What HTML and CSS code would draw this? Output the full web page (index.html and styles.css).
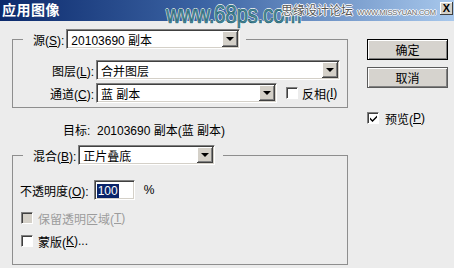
FILE: index.html
```
<!DOCTYPE html>
<html lang="zh-CN">
<head>
    <meta charset="UTF-8">
    <title>应用图像</title>
    <link rel="stylesheet" href="styles.css">
</head>
<body>

    <div class="titlebar">
        <span class="title">应用图像</span>
        <span class="wm-site">www.68ps.com</span>
        <span class="wm-forum">思缘设计论坛 <small>WWW.MISSYUAN.COM</small></span>
        <span class="close">X</span>
    </div>

    <div class="dialog">
        <div class="left">
            <fieldset class="group g1">
                <legend>
                    <span class="legend-lbl">源(<u>S</u>):</span>
                    <div class="select src"><span>20103690 副本</span><i class="arrow"></i></div>
                </legend>
                <div class="rows">
                    <div class="row">
                        <span class="lbl">图层(<u>L</u>):</span>
                        <div class="select layer"><span>合并图层</span><i class="arrow"></i></div>
                    </div>
                    <div class="row">
                        <span class="lbl">通道(<u>C</u>):</span>
                        <div class="select channel"><span>蓝 副本</span><i class="arrow"></i></div>
                        <label class="check invert"><span class="box"></span>反相(<u>I</u>)</label>
                    </div>
                </div>
            </fieldset>

            <p class="target">目标:&nbsp; 20103690 副本(蓝 副本)</p>

            <fieldset class="group g2">
                <legend>
                    <span class="legend-lbl">混合(<u>B</u>):</span>
                    <div class="select blend"><span>正片叠底</span><i class="arrow"></i></div>
                </legend>
                <div class="rows">
                    <div class="row opacity">
                        <span>不透明度(<u>O</u>):</span>
                        <div class="input"><span class="sel">100</span></div>
                        <span class="pct">%</span>
                    </div>
                    <label class="check disabled"><span class="box"></span>保留透明区域(<u>T</u>)</label>
                    <label class="check"><span class="box"></span>蒙版(<u>K</u>)...</label>
                </div>
            </fieldset>
        </div>

        <div class="right">
            <button class="btn default">确定</button>
            <button class="btn">取消</button>
            <label class="check preview"><span class="box checked">
                <svg width="7" height="7" viewBox="0 0 7 7"><path d="M0 2.5 L2.5 5 L7 0.5 L7 2.5 L2.5 7 L0 4.5 Z" fill="#000"/></svg>
            </span>预览(<u>P</u>)</label>
        </div>
    </div>

</body>
</html>
```

FILE: styles.css
```
body { margin: 0; width: 454px; height: 268px; overflow: hidden; background: #ececec; font-family: "Liberation Sans", "Noto Sans CJK SC", sans-serif; font-size: 12px; color: #000; }
u { text-decoration: underline; text-underline-offset: 1px; }

/* title bar + watermark */
.titlebar { position: relative; height: 21px; background: linear-gradient(to right, #0c2a6c 0%, #3c64a4 45%, #a8c8ec 100%); }
.title { display: inline-block; padding: 1px 0 0 2px; color: #fff; font-weight: bold; font-size: 14px; letter-spacing: 0.5px; line-height: 18px; }
.wm-site { position: absolute; left: 166px; top: -1px; font-size: 26px; line-height: 30px; letter-spacing: -0.5px; color: #4a8c9c; -webkit-text-stroke: 0.7px #1d5a6a; text-shadow: 1px 0 #fff, -1px 0 #fff, 0 1px #fff, 0 -1px #fff; transform: scaleX(0.8); transform-origin: left top; }
.wm-forum { position: absolute; left: 281px; top: 4px; font-size: 12px; line-height: 15px; color: #555; text-shadow: 1px 0 #fff, -1px 0 #fff, 0 1px #fff, 0 -1px #fff; }
.wm-forum small { font-size: 7.5px; color: #666; margin-left: 1px; letter-spacing: -0.2px; }
.close { position: absolute; left: 440px; top: 2px; width: 13px; height: 13px; background: #d4d0c8; box-shadow: inset -1px -1px #404040, inset 1px 1px #fff; font-weight: bold; font-size: 11px; line-height: 13px; text-align: center; }

/* layout */
.dialog { display: flex; padding-top: 8px; }
.left { margin-left: 12px; width: 336px; }
.right { margin-left: 19px; padding-top: 10px; display: flex; flex-direction: column; align-items: flex-start; }

/* group boxes */
.group { margin: 0; padding: 0; border: 1px solid #8e8e8e; width: 336px; box-sizing: border-box; min-width: 0; }
.group legend { margin-left: 10px; padding: 0 6px 0 10px; display: flex; align-items: center; }
.legend-lbl { margin-right: 2px; }
.g2 legend { padding-right: 8px; }
.rows { padding: 11px 0 4px; }
.g2 .rows { padding: 15px 0 9px 7px; }
.row { display: flex; align-items: center; height: 20px; margin-bottom: 3px; }
.row:last-child { margin-bottom: 0; }
.lbl { width: 81px; text-align: right; margin-right: 2px; }

/* fake selects */
.select { display: flex; align-items: center; height: 20px; box-sizing: border-box; background: #fff; border: 1px solid; border-color: #808080 #fff #fff #808080; box-shadow: inset 1px 1px #404040, inset -1px -1px #d4d0c8; padding-left: 4px; }
.select span { flex: 1; }
.arrow { width: 16px; height: 16px; box-sizing: border-box; margin-right: 1px; background: #d4d0c8; box-shadow: inset -1px -1px #404040, inset 1px 1px #fff, inset -2px -2px #808080; position: relative; }
.arrow::after { content: ""; position: absolute; left: 4px; top: 6px; border-left: 4px solid transparent; border-right: 4px solid transparent; border-top: 4px solid #000; }
.src { width: 174px; }
.layer { width: 244px; }
.channel { width: 181px; }
.blend { width: 137px; }

.target { margin: 16px 0 7px 51px; line-height: 14px; }

/* opacity */
.opacity { margin-bottom: 9px; }
.input { margin-left: 5px; width: 41px; height: 20px; box-sizing: border-box; background: #fff; border: 1px solid; border-color: #808080 #fff #fff #808080; box-shadow: inset 1px 1px #404040, inset -1px -1px #d4d0c8; padding: 3px 0 0 2px; }
.sel { background: #0a246a; color: #fff; padding: 0 1px; line-height: 14px; display: inline-block; }
.pct { margin-left: 9px; }

/* checkboxes */
.check { display: flex; align-items: center; height: 18px; margin-bottom: 5px; }
.box { width: 12px; height: 12px; box-sizing: border-box; background: #fff; border: 1px solid; border-color: #808080 #fff #fff #808080; box-shadow: inset 1px 1px #404040; margin: 0 5px 0 1px; display: flex; align-items: center; justify-content: center; }
.disabled { color: #9c9c9c; }
.disabled .box { background: #d4d0c8; }
.invert { margin: 0 0 0 8px; }
.invert .box { margin-right: 4px; }
.preview { margin-top: 14px; }
.preview .box { margin-left: 0; margin-right: 6px; }
.box svg { display: block; margin-left: 1px; }

/* buttons */
.btn { width: 81px; height: 21px; margin: 0 0 7px; padding: 0; font: inherit; background: #d6d3ce; border: 1px solid #5a5a5a; box-shadow: inset 1px 1px #fff, inset -1px -1px #808080; }
.btn.default { border-color: #000; }
```
